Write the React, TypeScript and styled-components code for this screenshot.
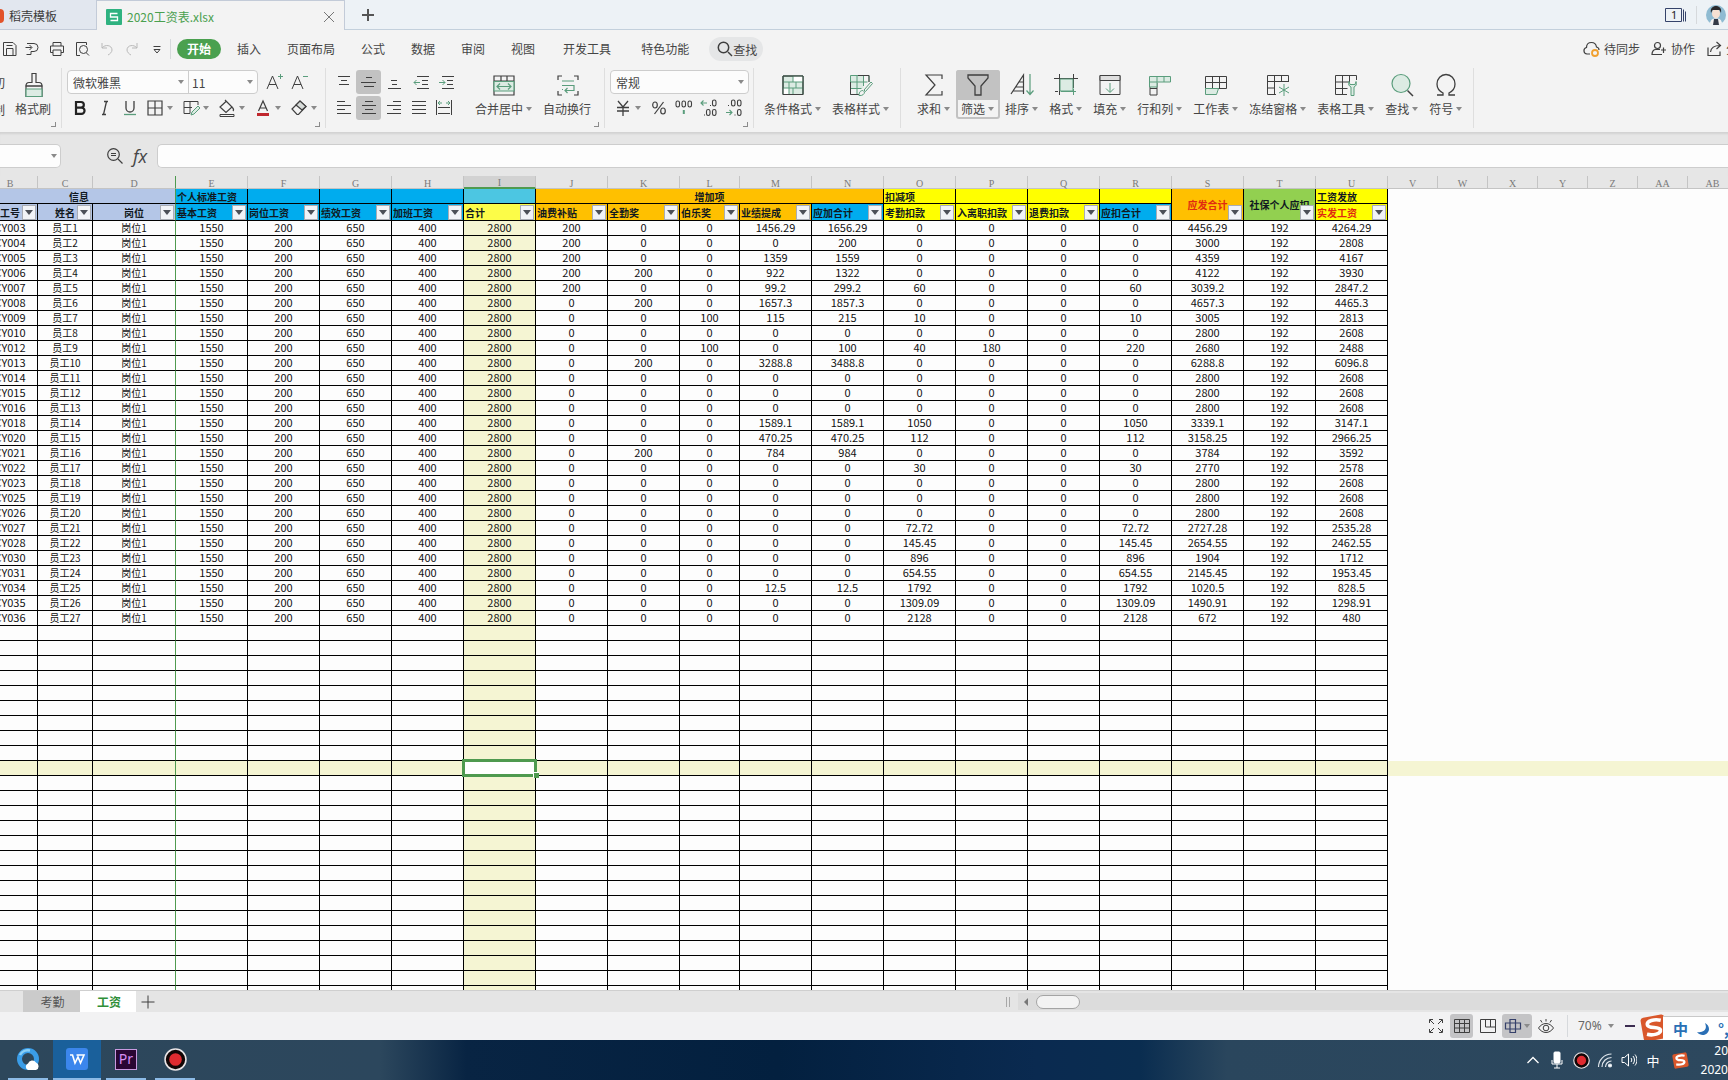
import React from 'react';
import styled, { createGlobalStyle, css } from 'styled-components';

const UI = '"Noto Sans CJK SC", "Noto Sans", sans-serif';
const GREEN = '#4aa04f';
const LINE_GREEN = '#4f9a4f';
const TINT = '#f5f5d3';

const Global = createGlobalStyle`
  *, *::before, *::after { box-sizing: border-box; }
  body { margin: 0; font-family: ${UI}; font-size: 12px; color: #454545; background: #f2f2f2; overflow: hidden; }
  button, input, select { font: inherit; color: inherit; margin: 0; padding: 0; border: 0; background: none; outline: none; }
  svg { display: block; flex: none; }
`;

const Window = styled.div`
  display: flex;
  flex-direction: column;
  height: 100vh;
  overflow: hidden;
`;

/* ---------- title tabs ---------- */
const TitleBar = styled.header`
  display: flex;
  flex: none;
  height: 30px;
  background: #edf2f6;
  box-shadow: inset 0 -1px #c3d0dc;
`;
const DocTab = styled.div<{ $active?: boolean }>`
  display: flex;
  align-items: center;
  gap: 5px;
  width: ${(p) => (p.$active ? 249 : 96)}px;
  padding: 2px ${(p) => (p.$active ? 9 : 0)}px 0;
  line-height: 18px;
  color: ${(p) => (p.$active ? GREEN : '#3c3c3c')};
  background: ${(p) => (p.$active ? '#f3f3f3' : '#e2e7ef')};
  border: solid #c3cbd8;
  border-width: ${(p) => (p.$active ? '1px 1px 0' : '0 0 1px')};
`;
const TabName = styled.span`
  flex: 1;
  white-space: nowrap;
`;
const DocerMark = styled.span`
  width: 4px;
  height: 14px;
  border-radius: 0 7px 7px 0;
  background: #e2532a;
`;
const PlainButton = styled.button<{ $w: number }>`
  display: flex;
  flex: none;
  align-items: center;
  justify-content: center;
  width: ${(p) => p.$w}px;
`;
const TitleRight = styled.div`
  display: flex;
  align-items: center;
  gap: 9px;
  margin-left: auto;
  padding-right: 2px;
`;
const Rule = styled.i<{ $h: number }>`
  flex: none;
  width: 1px;
  height: ${(p) => p.$h}px;
  background: #d6d9dc;
`;

/* ---------- menu ---------- */
const MenuBar = styled.nav`
  display: flex;
  flex: none;
  align-items: center;
  height: 38px;
  background: #f3f3f3;
  overflow: hidden;
`;
const QuickTools = styled.div`
  display: flex;
  align-items: center;
  padding-right: 1px;
`;
const MenuItem = styled.button<{ $wide?: boolean }>`
  flex: none;
  padding: 0 ${(p) => (p.$wide ? 15 : 13)}px;
  line-height: 20px;
  white-space: nowrap;
`;
const StartItem = styled(MenuItem)`
  margin: 0 3px 0 6px;
  padding: 0 10px;
  border-radius: 10px;
  color: #fff;
  font-weight: 700;
  background: ${GREEN};
`;
const SearchItem = styled.button`
  display: flex;
  align-items: center;
  flex: none;
  height: 24px;
  margin-left: 5px;
  padding: 0 6px 0 8px;
  border-radius: 12px;
  background: #e5e6e7;
`;
const Cloud = styled.div`
  display: flex;
  gap: 11px;
  margin-left: auto;
  margin-right: -22px;
`;
const CloudItem = styled.button`
  display: flex;
  flex: none;
  align-items: center;
  gap: 4px;
  line-height: 20px;
  white-space: nowrap;
`;

/* ---------- ribbon ---------- */
const Ribbon = styled.div`
  display: flex;
  flex: none;
  height: 64px;
  background: #f3f3f3;
  overflow: hidden;
`;
const Group = styled.section<{ $pad?: string }>`
  position: relative;
  display: flex;
  flex: none;
  height: 60px;
  padding: ${(p) => p.$pad || '2px 5px 0'};
  border-right: 1px solid #dedede;
`;
const Corner = styled.i`
  position: absolute;
  right: 5px;
  bottom: 1px;
  width: 5px;
  height: 5px;
  border: solid #8b8b8b;
  border-width: 0 1px 1px 0;
`;
const Stack = styled.div`
  display: flex;
  flex-direction: column;
  gap: 2px;
`;
const ToolRow = styled.div`
  display: flex;
  align-items: center;
  height: 24px;
`;
const Tool = styled.button<{ $on?: boolean }>`
  display: flex;
  flex: none;
  align-items: center;
  justify-content: center;
  width: 25px;
  height: 24px;
  border-radius: 3px;
  ${(p) => p.$on && css`background: #c2c2c2;`}
`;
const DropTool = styled(Tool)`
  justify-content: flex-start;
  gap: 2px;
  width: 36px;
  padding-left: 3px;
`;
const CutLabels = styled.div`
  display: flex;
  flex-direction: column;
  gap: 3px;
  width: 5px;
  overflow: hidden;
  direction: rtl;
`;
const CutButton = styled.button`
  height: 24px;
  white-space: nowrap;
`;
const BigButton = styled.button<{ $on?: boolean }>`
  display: flex;
  flex: none;
  flex-direction: column;
  align-items: center;
  height: 49px;
  border-radius: 3px;
  white-space: nowrap;
  ${(p) => p.$on && css`box-shadow: inset 0 0 0 2px #c2c2c2;`}
`;
const BigIcon = styled.span<{ $on?: boolean }>`
  display: flex;
  align-items: center;
  justify-content: center;
  width: 100%;
  height: 30px;
  border-radius: 3px 3px 0 0;
  ${(p) => p.$on && css`background: #c2c2c2;`}
`;
const BigLabel = styled.span`
  display: flex;
  align-items: center;
  gap: 3px;
  padding: 0 6px 0 5px;
  line-height: 18px;
`;
const Fields = styled.div`
  display: flex;
  height: 24px;
  border: 1px solid #cdcdcd;
  border-radius: 4px;
  background: #fcfcfc;
`;
const Field = styled.label<{ $w: number; $line?: boolean }>`
  display: flex;
  align-items: center;
  width: ${(p) => p.$w}px;
  padding: 0 4px 0 5px;
  ${(p) => p.$line && css`border-left: 1px solid #cdcdcd; padding-left: 3px;`}
`;
const Pick = styled.select`
  flex: 1;
  min-width: 0;
  height: 22px;
  appearance: none;
`;
const GrowTools = styled.div`
  display: flex;
  padding-left: 3px;
`;
const Spacer = styled.span<{ $w: number }>`
  flex: none;
  width: ${(p) => p.$w}px;
`;

/* ---------- formula bar ---------- */
const FormulaBar = styled.div`
  display: flex;
  flex: none;
  align-items: center;
  height: 44px;
  padding: 11px 0 8px;
  background: #e6e6e6;
  box-shadow: inset 0 3px 2px -1px #d2d2d2;
`;
const NameBox = styled.label`
  display: flex;
  align-items: center;
  width: 61px;
  height: 24px;
  padding-right: 3px;
  border: 1px solid #cdcdcd;
  border-left: 0;
  border-radius: 0 5px 5px 0;
  background: #fdfdfd;
`;
const NameInput = styled.input`
  flex: 1;
  min-width: 0;
`;
const FormulaTools = styled.div`
  display: flex;
  align-items: center;
  gap: 9px;
  padding: 0 10px 0 45px;
`;
const FormulaInput = styled.input`
  flex: 1;
  height: 24px;
  && {
    border: 1px solid #cdcdcd;
    border-right: 0;
    border-radius: 5px 0 0 5px;
    background: #fdfdfd;
  }
`;
const Fx = styled.button`
  && { font: italic 18px/20px "Open Sans", sans-serif; }
`;

/* ---------- sheet ---------- */
const Sheet = styled.main`
  flex: 1;
  min-height: 0;
  overflow: hidden;
  background: #fdfdfd;
`;
const Grid = styled.table`
  margin-left: -17px;
  border-collapse: separate;
  border-spacing: 0;
  table-layout: fixed;
  color: #111;
`;
const Col = styled.col<{ $w: number }>`
  width: ${(p) => p.$w}px;
`;
const Letter = styled.th<{ $on?: boolean; $freeze?: boolean }>`
  height: 13px;
  padding: 2px 0 0;
  font: 10px/9px "Liberation Serif", serif;
  color: #7a7a7a;
  background: ${(p) => (p.$on ? '#d2d2d2' : '#e6e6e6')};
  border-right: 1px solid ${(p) => (p.$freeze ? LINE_GREEN : '#c4c4c4')};
  border-bottom: ${(p) => (p.$on ? `2px solid ${LINE_GREEN}` : '1px solid #c4c4c4')};
`;
const Head = styled.th<{ $bg: string; $h: number; $left?: boolean; $red?: boolean; $freeze?: boolean }>`
  position: relative;
  height: ${(p) => p.$h}px;
  padding: 0 ${(p) => (p.$left ? 1 : 0)}px;
  font-size: 10px;
  font-weight: 700;
  line-height: 13px;
  white-space: nowrap;
  overflow: hidden;
  text-align: ${(p) => (p.$left ? 'left' : 'center')};
  color: ${(p) => (p.$red ? '#e02a10' : '#101820')};
  background: ${(p) => p.$bg};
  border: solid #000;
  border-width: 0 1px 1px 0;
  ${(p) => p.$freeze && css`border-right-color: ${LINE_GREEN};`}
`;
const Filter = styled.button`
  position: absolute;
  right: 1px;
  bottom: 0;
  display: flex;
  align-items: center;
  justify-content: center;
  width: 14px;
  height: 15px;
  && { background: #f1f3f7; border: 1px solid #a9adb5; }
`;
const Cell = styled.td<{ $text?: boolean; $tint?: boolean; $freeze?: boolean; $free?: boolean }>`
  position: relative;
  height: 15px;
  padding: 0;
  font-size: ${(p) => (p.$text ? 10 : 11)}px;
  line-height: ${(p) => (p.$text ? 14 : 13)}px;
  vertical-align: top;
  text-align: center;
  white-space: nowrap;
  ${(p) => p.$tint && css`background: ${TINT};`}
  ${(p) => !p.$free && css`
    border: solid #000;
    border-width: 0 1px 1px 0;
  `}
  ${(p) => p.$freeze && css`border-right-color: ${LINE_GREEN};`}
`;
const Selection = styled.div`
  position: absolute;
  inset: -2px;
  z-index: 1;
  background: #fff;
  border: 3px solid ${LINE_GREEN};
  &::after {
    content: '';
    position: absolute;
    right: -5px;
    bottom: -4px;
    width: 6px;
    height: 6px;
    background: ${LINE_GREEN};
    border: solid #fff;
    border-width: 1px 0 0 1px;
  }
`;

/* ---------- sheet tabs ---------- */
const SheetBar = styled.div`
  display: flex;
  flex: none;
  align-items: stretch;
  height: 22px;
  padding-left: 23px;
  background: #e5e5e5;
  border-top: 1px solid #cfcfcf;
`;
const SheetTab = styled.button<{ $active?: boolean }>`
  width: ${(p) => (p.$active ? 56 : 57)}px;
  && {
    padding-left: 2px;
    color: ${(p) => (p.$active ? '#2f8f38' : '#555')};
    font-weight: ${(p) => (p.$active ? 700 : 400)};
    line-height: 18px;
    background: ${(p) => (p.$active ? '#fff' : '#cbcbcb')};
  }
`;
const ScrollArea = styled.div`
  display: flex;
  align-items: center;
  gap: 8px;
  width: 722px;
  margin-left: auto;
`;
const Track = styled.div`
  display: flex;
  flex: 1;
  align-items: center;
  gap: 8px;
  height: 17px;
  padding-left: 6px;
  background: #dcdcdc;
`;
const Thumb = styled.i`
  width: 44px;
  height: 14px;
  border: 1px solid #a4a4a4;
  border-radius: 7px;
  background: #f3f3f3;
`;

/* ---------- status bar ---------- */
const StatusBar = styled.footer`
  display: flex;
  flex: none;
  align-items: center;
  justify-content: flex-end;
  height: 28px;
  background: #f2f2f3;
`;
const View = styled.button<{ $on?: boolean; $w: number }>`
  display: flex;
  align-items: center;
  justify-content: center;
  gap: 2px;
  width: ${(p) => p.$w}px;
  height: 24px;
  border-radius: 3px;
  ${(p) => p.$on && css`&& { background: #c4c4c6; }`}
`;
const Views = styled.div`
  display: flex;
  gap: 2px;
  padding-right: 9px;
`;
const Zoom = styled.button`
  display: flex;
  align-items: center;
  gap: 6px;
  width: 51px;
  padding-left: 10px;
  && { font: 12px/20px "Noto Sans", sans-serif; color: #666; }
`;
const Ime = styled.div`
  display: flex;
  align-items: center;
  gap: 9px;
  height: 24px;
  margin-top: 4px;
  width: 88px;
`;
const ImeBar = styled.div`
  display: flex;
  flex: 1;
  align-items: center;
  gap: 8px;
  height: 24px;
  margin-left: -14px;
  padding-left: 10px;
  background: #fff;
  border-top: 1px solid #c9c9c9;
  color: #2a6fb5;
  font-size: 15px;
  font-weight: 700;
  line-height: 20px;
  overflow: hidden;
  white-space: nowrap;
`;

/* ---------- taskbar ---------- */
const Taskbar = styled.footer`
  display: flex;
  flex: none;
  justify-content: space-between;
  height: 40px;
  background: linear-gradient(90deg, #2d475b 0, #2c475d 22%, #082443 27%, #03203f 45%, #0a2a50 60%, #0a2d50 66%, #2a465d 71%, #2d485e 100%);
`;
const Apps = styled.div`
  display: flex;
  gap: 5px;
  padding-left: 8px;
`;
const TaskButton = styled.button<{ $on?: boolean }>`
  display: flex;
  align-items: center;
  justify-content: center;
  width: ${(p) => (p.$on ? 48 : 40)}px;
  margin-right: ${(p) => (p.$on ? 0 : 4)}px;
  &:first-child { margin-right: 0; }
  && {
    background: ${(p) => (p.$on ? '#1a609b' : 'transparent')};
    border-bottom: 2px solid #8dbbe6;
  }
`;
const PrLogo = styled.span`
  width: 22px;
  height: 21px;
  border: 1px solid #c99ae0;
  background: #2a0634;
  color: #d58cf2;
  font: 14px/18px "Noto Sans", sans-serif;
  text-align: center;
`;
const Tray = styled.div`
  display: flex;
  align-items: center;
  color: #fff;
`;
const TrayButton = styled.button<{ $wide?: boolean }>`
  display: flex;
  align-items: center;
  justify-content: center;
  width: ${(p) => (p.$wide ? 30 : 24)}px;
  height: 38px;
  font-size: 13px;
`;
const Clock = styled.time`
  width: 33px;
  font: 12px/19px "Noto Sans", sans-serif;
  text-align: right;
`;

/* ---------- icons ---------- */
type IcoProps = { w?: number; h?: number; d?: string; children?: React.ReactNode; sw?: number; c?: string };
const Ico = ({ w = 18, h = 18, d, children, sw = 1, c = '#3f3f3f' }: IcoProps) => (
  <svg width={w} height={h} viewBox={`0 0 ${w} ${h}`} fill="none" stroke={c} strokeWidth={sw} aria-hidden="true">
    {d && <path d={d} />}
    {children}
  </svg>
);
const G = '#5a9d7c';
const GF = '#dcebe3';
const Caret = ({ c = '#8a8a8a' }: { c?: string }) => (
  <svg width="6" height="4" viewBox="0 0 6 4" aria-hidden="true"><path d="M0 0h6L3 4z" fill={c} /></svg>
);
const Fold = ({ d }: { d: string }) => <path d={d} stroke={G} />;

const quick: [string, React.ReactNode][] = [
  ['保存', <Ico key="a" w={16} h={16} d="M1.500 1.500h9.500l3 3v10h-12.500zM4.500 14.500V7.500h6.500v7M4.500 4.500h6" />],
  ['输出为PDF', <Ico key="b" w={16} h={16} d="M3 2.500h7a4 4 0 010 8H7v3H2.500M1.500 6.500h6M5.500 4l2.500 2.500L5.500 9" />],
  ['打印', <Ico key="c" w={16} h={16} d="M4 5V1.500h8V5M4 11.500H1.500V5h13v6.500H12M4 9h8v5.500H4z" />],
  ['打印预览', <Ico key="d" w={16} h={16} d="M6 14.500H2.500v-13h10V4M12.500 12l2.500 2.500"><circle cx="9.500" cy="8.500" r="4" /></Ico>],
  ['撤销', <Ico key="e" w={16} h={16} c="#b9b9b9" d="M3 2v5h5M3 7c3-4 10-3 10 2 0 2-2 4-4 5" />],
  ['恢复', <Ico key="f" w={16} h={16} c="#b9b9b9" d="M13 2v5H8M13 7C10 3 3 4 3 9c0 2 2 4 4 5" />],
  ['更多', <Ico key="g" w={16} h={16} d="M4.500 5.500h7M5 8.500l3 3.500 3-3.500z" />],
];

const hl = (rows: [number, number, number][]) => rows.map(([x, y, w]) => `M${x} ${y}.5h${w}`).join('');
const alignTop = hl([[3, 3, 12], [6, 7, 6], [4, 11, 10]]);
const alignMid = hl([[6, 4, 6], [1, 9, 15], [4, 13, 10]]);
const alignBot = hl([[6, 7, 6], [7, 11, 5], [3, 15, 13]]);
const alignL = hl([[2, 2, 8], [2, 6, 14], [2, 10, 8], [2, 14, 14]]);
const alignC = hl([[5, 2, 8], [2, 6, 14], [5, 10, 8], [2, 14, 14]]);
const alignR = hl([[8, 2, 8], [2, 6, 14], [8, 10, 8], [2, 14, 14]]);
const alignJ = hl([[2, 2, 14], [2, 6, 14], [2, 10, 14], [2, 14, 14]]);

type BigProps = { label: string; drop?: boolean; on?: boolean; children: React.ReactNode };
const Big = ({ label, drop = true, on, children }: BigProps) => (
  <BigButton $on={on}>
    <BigIcon $on={on}>{children}</BigIcon>
    <BigLabel>{label}{drop && <Caret />}</BigLabel>
  </BigButton>
);

const bigTools: { label: string; on?: boolean; icon: React.ReactNode }[] = [
  { label: '求和', icon: <Ico w={24} h={24} sw={1.2} d="M20 6V2H4l9 10-9 10h16v-4" /> },
  { label: '筛选', on: true, icon: <Ico w={24} h={24} sw={1.3} d="M2 2h20v3l-7 8v9H9v-9L2 5z" /> },
  { label: '排序', icon: <Ico w={24} h={24} sw={1.2} d="M1 21L13.500 2v19M6 14h7.500M3 18h10.500M9 9h4.500"><Fold d="M20 1v20M16.500 17.500L20 21.500l3.500-4" /></Ico> },
  { label: '格式', icon: <Ico w={24} h={24} d="M0 5.500h24M5.500 1v21M1 18.500h3M19.500 1v14"><path d="M6 6h13v12H6z" fill={GF} stroke={G} /><Fold d="M7 18.500h15M19.500 16v6" /></Ico> },
  { label: '填充', icon: <Ico w={24} h={24} d="M2 2.500h20v19H2z"><path d="M2 2.500h20v5H2z" fill="#dedede" /><Fold d="M12 10v9M8 15.500l4 4 4-4" /></Ico> },
  { label: '行和列', icon: <Ico w={24} h={24} d="M2 10v12h7V10M2 15.500h7"><path d="M1.500 3.500h21V9H9v5H1.500z" fill={GF} stroke={G} /><Fold d="M9 3.500V9H1.500M16 3.500V9" /></Ico> },
  { label: '工作表', icon: <Ico w={24} h={24} d="M1.500 3.500h21v12h-21zM8.500 3.500v12M15.500 3.500v12M1.500 9.500h21"><path d="M1.500 15.500h13l-2 6h-11z" fill={GF} stroke={G} /></Ico> },
  { label: '冻结窗格', icon: <Ico w={24} h={24} d="M10 21.500H1.500v-19h21V9M1.500 8.500h21M8.500 2.500v19M15.500 2.500v6M1.500 15h7"><Fold d="M18 11v12M13 14l10 6M23 14l-10 6" /></Ico> },
  { label: '表格工具', icon: <Ico w={24} h={24} d="M13 21.500H1.500v-19h21V7M8.500 2.500v19M15.500 2.500v7M1.500 9h14M1.500 15.500h12"><path d="M15 8.500c-1 3 0 4.500 2 5.500v8.500h3V14c2-1 3-2.500 2-5.500l-1 3h-5z" fill={GF} stroke={G} /></Ico> },
  { label: '查找', icon: <Ico w={24} h={24} d="M17.500 17.500L23 23" sw={1.5}><circle cx="11" cy="10.500" r="9" fill={GF} stroke={G} strokeWidth="1.200" /></Ico> },
  { label: '符号', icon: <Ico w={24} h={24} sw={1.3} d="M3 22h6v-2C5 18 3 15 3 11a9 9.500 0 0118 0c0 4-2 7-6 9v2h6" /> },
];

/* ---------- data ---------- */
const cols: [string, number][] = [
  ['B', 55], ['C', 55], ['D', 83], ['E', 72], ['F', 72], ['G', 72], ['H', 72], ['I', 72], ['J', 72], ['K', 72],
  ['L', 60], ['M', 72], ['N', 72], ['O', 72], ['P', 72], ['Q', 72], ['R', 72], ['S', 72], ['T', 72], ['U', 72],
  ['V', 50], ['W', 50], ['X', 50], ['Y', 50], ['Z', 50], ['AA', 50], ['AB', 50],
];
const LAVENDER = '#b4c6e7', BLUE = '#00acee', ORANGE = '#ffc000', YELLOW = '#ffff00', LEAF = '#92d050';
const heads: [string, string, boolean?, boolean?][] = [
  ['工号', LAVENDER], ['姓名', LAVENDER], ['岗位', LAVENDER],
  ['基本工资', BLUE, true], ['岗位工资', BLUE, true], ['绩效工资', BLUE, true], ['加班工资', BLUE, true],
  ['合计', '#fcfc48', true], ['油费补贴', ORANGE, true], ['全勤奖', ORANGE, true], ['伯乐奖', ORANGE, true],
  ['业绩提成', ORANGE, true], ['应加合计', BLUE, true], ['考勤扣款', YELLOW, true], ['入离职扣款', YELLOW, true],
  ['退费扣款', YELLOW, true], ['应扣合计', BLUE, true], ['实发工资', YELLOW, true, true],
];
const ids = '003 004 005 006 007 008 009 010 012 013 014 015 016 018 020 021 022 023 025 026 027 028 030 031 034 035 036'.split(' ');
const tails = `200 0 0 1456.29 1656.29 0 0 0 0 4456.29 192 4264.29
200 0 0 0 200 0 0 0 0 3000 192 2808
200 0 0 1359 1559 0 0 0 0 4359 192 4167
200 200 0 922 1322 0 0 0 0 4122 192 3930
200 0 0 99.2 299.2 60 0 0 60 3039.2 192 2847.2
0 200 0 1657.3 1857.3 0 0 0 0 4657.3 192 4465.3
0 0 100 115 215 10 0 0 10 3005 192 2813
0 0 0 0 0 0 0 0 0 2800 192 2608
0 0 100 0 100 40 180 0 220 2680 192 2488
0 200 0 3288.8 3488.8 0 0 0 0 6288.8 192 6096.8
0 0 0 0 0 0 0 0 0 2800 192 2608
0 0 0 0 0 0 0 0 0 2800 192 2608
0 0 0 0 0 0 0 0 0 2800 192 2608
0 0 0 1589.1 1589.1 1050 0 0 1050 3339.1 192 3147.1
0 0 0 470.25 470.25 112 0 0 112 3158.25 192 2966.25
0 200 0 784 984 0 0 0 0 3784 192 3592
0 0 0 0 0 30 0 0 30 2770 192 2578
0 0 0 0 0 0 0 0 0 2800 192 2608
0 0 0 0 0 0 0 0 0 2800 192 2608
0 0 0 0 0 0 0 0 0 2800 192 2608
0 0 0 0 0 72.72 0 0 72.72 2727.28 192 2535.28
0 0 0 0 0 145.45 0 0 145.45 2654.55 192 2462.55
0 0 0 0 0 896 0 0 896 1904 192 1712
0 0 0 0 0 654.55 0 0 654.55 2145.45 192 1953.45
0 0 0 12.5 12.5 1792 0 0 1792 1020.5 192 828.5
0 0 0 0 0 1309.09 0 0 1309.09 1490.91 192 1298.91
0 0 0 0 0 2128 0 0 2128 672 192 480`.split('\n').map((l) => l.split(' '));
const rows: string[][] = Array.from({ length: 52 }, (_, i) =>
  i < tails.length ? [`CY${ids[i]}`, `员工${i + 1}`, '岗位1', '1550', '200', '650', '400', '2800', ...tails[i]] : Array(20).fill(''),
);
const ACTIVE_ROW = 36;
const ACTIVE_COL = 7;

const FilterButton = ({ name }: { name: string }) => (
  <Filter aria-label={`${name}筛选`}>
    <svg width="8" height="5" viewBox="0 0 8 5" aria-hidden="true"><path d="M0 0h8L4 5z" fill="#4c5058" /></svg>
  </Filter>
);

const SogouMark = ({ size }: { size: number }) => (
  <svg width={size} height={size} viewBox="0 0 28 28" aria-hidden="true">
    <g transform="rotate(-10 14 14)">
      <rect x="2" y="2" width="24" height="24" rx="3" fill="#d9572b" />
      <path d="M22 7.500C16 5 8 5.500 8 9.500c0 5 12 3 12 7.500 0 4-8 4.500-14 2" fill="none" stroke="#fff" strokeWidth="3.600" />
    </g>
  </svg>
);
const RecordMark = ({ size }: { size: number }) => (
  <svg width={size} height={size} viewBox="0 0 22 22" aria-hidden="true">
    <circle cx="11" cy="11" r="10" fill="#120606" stroke="#e9e4e6" strokeWidth="1.500" />
    <circle cx="11" cy="11" r="6" fill="#e02b30" />
  </svg>
);

export default function App() {
  return (
    <Window lang="zh-CN">
      <Global />
      <TitleBar>
        <DocTab><DocerMark /><TabName>稻壳模板</TabName></DocTab>
        <DocTab $active>
          <svg width="16" height="16" viewBox="0 0 16 16" aria-hidden="true">
            <rect width="16" height="16" rx="1" fill="#2fb280" />
            <path d="M11.500 4.500h-7V8h7v3.500h-7" fill="none" stroke="#fff" strokeWidth="1.300" />
          </svg>
          <TabName>2020工资表.xlsx</TabName>
          <PlainButton $w={12} aria-label="关闭"><Ico w={12} h={12} c="#777" d="M1 1l10 10M11 1L1 11" /></PlainButton>
        </DocTab>
        <PlainButton $w={46} aria-label="新建"><Ico w={14} h={14} sw={2} c="#555" d="M7 1v12M1 7h12" /></PlainButton>
        <TitleRight>
          <Ico w={22} h={16} c="#35436a" d="M.5 1.500h16v13H.5zM18.500 2.500v12M20.500 4.500v10">
            <text x="6" y="12" fontSize="11" fontFamily="Noto Sans" fill="#222" stroke="none">1</text>
          </Ico>
          <Rule $h={18} />
          <svg width="20" height="20" viewBox="0 0 20 20" aria-hidden="true">
            <circle cx="10" cy="10" r="10" fill="#8fbbd2" />
            <path d="M4 18c1-4 3-4.500 6-4.500s5 .5 6 4.500c-3 2.500-9 2.500-12 0z" fill="#f4f4f4" />
            <path d="M8 14h4l1 6H7z" fill="#333a48" />
            <ellipse cx="10" cy="8.500" rx="4" ry="5" fill="#f6e1d3" />
            <path d="M5 8c-1-5 2-7 5-7s6 2 5 7l-1.500-3h-7z" fill="#2b2b2e" />
          </svg>
        </TitleRight>
      </TitleBar>

      <MenuBar>
        <QuickTools>
          {quick.map(([n, icon], i) => (
            <PlainButton key={n} $w={i ? 25 : 19} aria-label={n}>{icon}</PlainButton>
          ))}
        </QuickTools>
        <Rule $h={20} />
        <StartItem>开始</StartItem>
        {['插入', '页面布局', '公式', '数据', '审阅', '视图'].map((m) => <MenuItem key={m}>{m}</MenuItem>)}
        <MenuItem $wide>开发工具</MenuItem>
        <MenuItem $wide>特色功能</MenuItem>
        <SearchItem>
          <Ico w={16} h={16} sw={1.5} d="M11 11l4 4"><circle cx="6.500" cy="6.500" r="5.200" /></Ico>
          查找
        </SearchItem>
        <Cloud>
          <CloudItem>
            <Ico w={17} h={16} sw={1.2} d="M7 13H4a3.300 3.300 0 01-.5-6.500C3.500 3 6 1.500 8.500 1.500S13 3 13.500 6c2 .5 2.500 2 2.500 3"><circle cx="12" cy="12" r="3" stroke="#f0a030" strokeWidth="1.800" /></Ico>
            待同步
          </CloudItem>
          <CloudItem>
            <Ico w={16} h={16} sw={1.2} d="M9 8.500H5c-2.500 0-4 2-4 5h10M10 9h5M12.500 6.500v5.500"><circle cx="6.500" cy="4.500" r="3" /></Ico>
            协作
          </CloudItem>
          <CloudItem>
            <Ico w={16} h={16} sw={1.2} d="M2 6.500v8h12v-4M4.500 11C5 7 8 4.500 14 4.500M10.500 1l4 3.500-4 3.500" />
            分享
          </CloudItem>
        </Cloud>
      </MenuBar>

      <Ribbon>
        <Group $pad="2px 4px 0 0">
          <CutLabels><CutButton>剪切</CutButton><CutButton>复制</CutButton></CutLabels>
          <Spacer $w={5} />
          <Big label="格式刷" drop={false}>
            <Ico w={20} h={26} sw={1.2} d="M8 1.500h4v9h3c2 0 3 1 3 3.500H2c0-2.500 1-3.500 3-3.500h3z"><path d="M2 14h16v10.500H2z" /><path d="M2 17h16v7.500H2z" fill={GF} stroke={G} /></Ico>
          </Big>
          <Corner />
        </Group>

        <Group $pad="2px 3px 0 5px">
          <Stack>
            <ToolRow>
              <Fields>
                <Field $w={120}><Pick aria-label="字体"><option>微软雅黑</option></Pick><Caret /></Field>
                <Field $w={69} $line><Pick aria-label="字号"><option>11</option></Pick><Caret /></Field>
              </Fields>
              <GrowTools>
                <Tool aria-label="增大字号"><Ico d="M2 16L7.500 3 13 16M4 11.500h7"><Fold d="M13 3.500h5M15.500 1v5" /></Ico></Tool>
                <Tool aria-label="减小字号"><Ico d="M2 16L7.500 3 13 16M4 11.500h7"><Fold d="M13 3.500h5" /></Ico></Tool>
              </GrowTools>
            </ToolRow>
            <ToolRow>
              <Tool aria-label="加粗"><Ico w={16} h={16} sw={2.2} c="#222" d="M4 2h5a2.800 2.800 0 010 5.700H4zM4 7.700h5.500a3 3 0 010 6.100H4z" /></Tool>
              <Tool aria-label="倾斜"><Ico w={16} h={16} d="M7 1.500h4M5 14.500h4M9.500 1.500l-3 13" sw={1.3} /></Tool>
              <Tool aria-label="下划线"><Ico w={16} h={16} sw={1.3} d="M4 1v7a4 4 0 008 0V1"><Fold d="M2 14.500h12" /></Ico></Tool>
              <DropTool aria-label="边框"><Ico w={20} h={18} sw={1.2} d="M3 2h14v14H3zM10 2v14M3 9h14" /><Caret /></DropTool>
              <DropTool aria-label="绘制边框"><Ico w={20} h={18} d="M17 6V2.500H3v12h6M3 8.500h8M9 2.500v12"><path d="M10 16l1-3 6-6 2 2-6 6z" fill={GF} stroke={G} /></Ico><Caret /></DropTool>
              <DropTool aria-label="填充颜色"><Ico w={20} h={18} sw={1.2} d="M8 1l7 7-6 5.500L3 8l6-5.500M15 8c2 2 2 3 1 4"><path d="M3 15.500h14v2H3z" strokeWidth="1" /></Ico><Caret /></DropTool>
              <DropTool aria-label="字体颜色"><Ico w={20} h={18} sw={1.2} d="M5.500 12L10 2l4.500 10M7 9h6"><path d="M4 15.500h12" stroke="#c0272d" strokeWidth="3" /></Ico><Caret /></DropTool>
              <DropTool aria-label="清除"><Ico w={20} h={18} sw={1.2} d="M3 10l8-8 6 5.500-7.500 8H8z"><path d="M7 6l6 5 4-3.500L11 2z" fill="#d8dcda" /></Ico><Caret /></DropTool>
            </ToolRow>
          </Stack>
          <Corner />
        </Group>

        <Group $pad="2px 7px 0 5px">
          <Stack>
            <ToolRow>
              <Tool aria-label="顶端对齐"><Ico d={alignTop} sw={1.2} /></Tool>
              <Tool $on aria-label="垂直居中"><Ico d={alignMid} sw={1.2} /></Tool>
              <Tool aria-label="底端对齐"><Ico d={alignBot} sw={1.2} /></Tool>
              <Spacer $w={2} />
              <Tool aria-label="减少缩进"><Ico d="M5 3.500h12M10 7.500h6M10 11.500h6M5 15.500h12"><Fold d="M2 9.500h6M4.500 7L2 9.500 4.500 12" /></Ico></Tool>
              <Tool aria-label="增加缩进"><Ico d="M5 3.500h12M10 7.500h6M10 11.500h6M5 15.500h12"><Fold d="M2 9.500h6M5.500 7L8 9.500 5.500 12" /></Ico></Tool>
            </ToolRow>
            <ToolRow>
              <Tool aria-label="左对齐"><Ico d={alignL} sw={1.2} /></Tool>
              <Tool $on aria-label="居中"><Ico d={alignC} sw={1.2} /></Tool>
              <Tool aria-label="右对齐"><Ico d={alignR} sw={1.2} /></Tool>
              <Tool aria-label="两端对齐"><Ico d={alignJ} sw={1.2} /></Tool>
              <Tool aria-label="分散对齐"><Ico d="M1.500 1v15M16.500 1v15M3 8.500h12M3 14.500h12"><Fold d="M3 4h4M11 4h4M5 2L3 4l2 2M13 2l2 2-2 2" /></Ico></Tool>
            </ToolRow>
          </Stack>
          <Spacer $w={12} />
          <Big label="合并居中">
            <Ico w={24} h={24} sw={1.2} d="M2 3h20v19H2zM2 8h20M9 3v5M15 3v5"><path d="M2 8.500h20V18H2z" fill={GF} stroke={G} /><Fold d="M5 13.500h14M8 10.500l-3 3 3 3M16 10.500l3 3-3 3" /></Ico>
          </Big>
          <Big label="自动换行" drop={false}>
            <Ico w={24} h={24} sw={1.2} d="M6 3H2v4M18 3h4v4M6 22H2v-4M18 22h4v-4"><Fold d="M6 8h12M6 12.500h12v5H9M11.500 15L9 17.500l2.500 2.500M6 16.500h1" /></Ico>
          </Big>
          <Corner />
        </Group>

        <Group $pad="2px 4px 0 5px">
          <Stack>
            <ToolRow>
              <Fields><Field $w={137}><Pick aria-label="数字格式"><option>常规</option></Pick><Caret /></Field></Fields>
            </ToolRow>
            <ToolRow>
              <DropTool aria-label="货币"><Ico w={20} h={18} sw={1.3} d="M5 2l5 6 5-6M4 8.500h12M4 12h12M10 8v9" /><Caret /></DropTool>
              <Tool aria-label="百分比"><Ico w={16} h={16} sw={1.2} d="M12.500 2l-9 12"><ellipse cx="4" cy="5" rx="2.300" ry="3" /><ellipse cx="12" cy="11" rx="2.300" ry="3" /></Ico></Tool>
              <Tool aria-label="千位分隔"><Ico w={20} h={18} sw={1.1}><rect x="2" y="2" width="3.500" height="6" rx="1.700" /><rect x="8" y="2" width="3.500" height="6" rx="1.700" /><rect x="14" y="2" width="3.500" height="6" rx="1.700" /><path d="M9.800 11v4" stroke={G} strokeWidth="2" /></Ico></Tool>
              <Tool aria-label="增加小数"><Ico w={20} h={18} sw={1.1}><rect x="13.500" y="1" width="3.500" height="6" rx="1.700" /><rect x="7.500" y="10.500" width="3.500" height="6" rx="1.700" /><rect x="13.500" y="10.500" width="3.500" height="6" rx="1.700" /><path d="M11 6.500h1M5 16h1" /><Fold d="M2 4h6M4.500 1.500L2 4l2.500 2.500" /></Ico></Tool>
              <Tool aria-label="减少小数"><Ico w={20} h={18} sw={1.1}><rect x="7.500" y="1" width="3.500" height="6" rx="1.700" /><rect x="13.500" y="1" width="3.500" height="6" rx="1.700" /><rect x="13.500" y="10.500" width="3.500" height="6" rx="1.700" /><path d="M4 6.500h1M10.500 16h1" /><Fold d="M2 13.500h6M5.500 11L8 13.500 5.500 16" /></Ico></Tool>
            </ToolRow>
          </Stack>
          <Corner />
        </Group>

        <Group>
          <Big label="条件格式">
            <Ico w={24} h={24}><path d="M2 3h20v18.500H2z" fill={GF} /><path d="M12 3h10v6H12zM2 15h6v6.500H2z" fill="#fff" stroke="none" /><path d="M2 3h20v18.500H2zM12 3v6M8 9v12.500M15 9v6M2 9h20M2 15h20M12 15v6" stroke={G} /><path d="M2 3h20v18.500H2z" /></Ico>
          </Big>
          <Big label="表格样式">
            <Ico w={24} h={24}><path d="M1.500 2.500h13v13h-13z" fill={GF} stroke="none" /><path d="M10 21.500H1.500v-19H20V9M8 2.500v19M14.500 2.500V13M1.500 9h17M1.500 15.500h11" stroke={G} /><path d="M9 2.500h11V9M1.500 9v12.500H10" /><path d="M10 22.500c0-4 2-5 4-5l1.500 1.500c0 2-2 4-5.500 3.500zM15 17l7-8 1.500 1.500-7 8z" fill="#f3f3f3" stroke={G} /></Ico>
          </Big>
        </Group>

        <Group $pad="2px 5px 0 11px">
          {bigTools.map((t) => <Big key={t.label} label={t.label} on={t.on}>{t.icon}</Big>)}
        </Group>
      </Ribbon>

      <FormulaBar>
        <NameBox><NameInput aria-label="名称框" /><Caret /></NameBox>
        <FormulaTools>
          <PlainButton $w={18} aria-label="浏览公式"><Ico sw={1.2} d="M12 12l4.500 4.500M5 6.500h5M5 8.500h5"><circle cx="7.500" cy="7.500" r="5.800" /></Ico></PlainButton>
          <Fx aria-label="插入函数">fx</Fx>
        </FormulaTools>
        <FormulaInput aria-label="编辑栏" />
      </FormulaBar>

      <Sheet>
        <Grid style={{ width: cols.reduce((s, c) => s + c[1], 0) }}>
          <colgroup>{cols.map(([n, w]) => <Col key={n} $w={w} />)}</colgroup>
          <thead>
            <tr>
              {cols.map(([n]) => <Letter key={n} $on={n === 'I'} $freeze={n === 'D'}>{n}</Letter>)}
            </tr>
            <tr>
              <Head $bg={LAVENDER} $h={15} colSpan={3} $freeze>信息</Head>
              <Head $bg={BLUE} $h={15} $left>个人标准工资</Head>
              <Head $bg={BLUE} $h={15} />
              <Head $bg={BLUE} $h={15} />
              <Head $bg={BLUE} $h={15} />
              <Head $bg="#4cc6e2" $h={15} />
              <Head $bg={ORANGE} $h={15} colSpan={5}>增加项</Head>
              <Head $bg={YELLOW} $h={15} $left>扣减项</Head>
              <Head $bg={YELLOW} $h={15} />
              <Head $bg={YELLOW} $h={15} />
              <Head $bg={YELLOW} $h={15} />
              <Head $bg={ORANGE} $h={32} rowSpan={2} $red>应发合计<FilterButton name="应发合计" /></Head>
              <Head $bg={LEAF} $h={32} rowSpan={2}>社保个人应扣<FilterButton name="社保个人应扣" /></Head>
              <Head $bg={YELLOW} $h={15} $left>工资发放</Head>
            </tr>
            <tr>
              {heads.map(([t, bg, left, red], i) => (
                <Head key={t} $bg={bg} $h={17} $left={left} $red={red} $freeze={i === 2}>{t}<FilterButton name={t} /></Head>
              ))}
            </tr>
          </thead>
          <tbody>
            {rows.map((r, ri) => (
              <tr key={ri}>
                {r.map((v, ci) => (
                  <Cell key={ci} $text={ci === 1 || ci === 2} $freeze={ci === 2} $tint={ri === ACTIVE_ROW || ci === ACTIVE_COL}>
                    {v}
                    {ri === ACTIVE_ROW && ci === ACTIVE_COL && <Selection />}
                  </Cell>
                ))}
                <Cell $free $tint={ri === ACTIVE_ROW} colSpan={7} />
              </tr>
            ))}
          </tbody>
        </Grid>
      </Sheet>

      <SheetBar>
        <SheetTab>考勤</SheetTab>
        <SheetTab $active>工资</SheetTab>
        <PlainButton $w={23} aria-label="新建工作表"><Ico w={14} h={14} d="M7 .5v13M.5 7h13" /></PlainButton>
        <ScrollArea>
          <Ico w={4} h={12} c="#a8a8a8" d="M.5 1v10M3.500 1v10" />
          <Track>
            <svg width="4" height="8" viewBox="0 0 4 8" aria-hidden="true"><path d="M4 0v8L0 4z" fill="#777" /></svg>
            <Thumb />
          </Track>
        </ScrollArea>
      </SheetBar>

      <StatusBar>
        <Views>
          <View $w={24} aria-label="全屏"><Ico w={16} h={16} d="M1.500 5V1.500H5M2 2l4 4M11 1.500h3.500V5M14 2l-4 4M1.500 11v3.500H5M2 14l4-4M14.500 11v3.500H11M14 14l-4-4" /></View>
          <View $w={23} $on aria-label="普通视图"><Ico w={18} h={16} d="M1.500 1.500h15v13h-15zM6.500 1.500v13M11.500 1.500v13M1.500 5.500h15M1.500 10h15" /></View>
          <View $w={25} aria-label="分页预览"><Ico w={18} h={16} d="M1.500 1.500h15v13h-15zM6.500 1.500V9h5V1.500M11.500 9h5" /></View>
          <View $w={30} $on aria-label="阅读模式"><Ico w={18} h={16} c="#35406a" sw={1.2} d="M6 1.500h5.500v13H6zM1.500 5h15v6h-15z" /><Caret /></View>
          <View $w={24} aria-label="护眼模式"><Ico w={18} h={16} d="M1.500 10c4-6 11-6 15 0-4 6-11 6-15 0zM9 1v2.500M3.500 2l1.500 2.500M14.500 2L13 4.500"><circle cx="9" cy="10" r="2.800" /></Ico></View>
        </Views>
        <Rule $h={22} />
        <Zoom>70%<Caret /></Zoom>
        <PlainButton $w={21} aria-label="缩小"><Ico w={10} h={4} sw={2} c="#3b2c50" d="M0 2h10" /></PlainButton>
        <Ime>
          <SogouMark size={28} />
          <ImeBar>
            中
            <Ico w={14} h={14}><path d="M9 1c3 7-2 10-8 9 5 6 12 2 12-3 0-3-2-5-4-6z" fill="#2a6fb5" stroke="none" /></Ico>
            <span>°,</span>
          </ImeBar>
        </Ime>
      </StatusBar>

      <Taskbar>
        <Apps>
          <TaskButton aria-label="QQ浏览器">
            <svg width="24" height="24" viewBox="0 0 24 24" aria-hidden="true">
              <circle cx="12" cy="12" r="8.500" fill="none" stroke="#3a9de8" strokeWidth="5" />
              <path d="M4 8a9 9 0 0110-4.500" fill="none" stroke="#8ad0f8" strokeWidth="2.500" />
              <path d="M12 23a3.500 3.500 0 010-6.500 4.500 4.500 0 018-1 4 4 0 010 7.500z" fill="#fff" />
            </svg>
          </TaskButton>
          <TaskButton $on aria-label="WPS">
            <svg width="22" height="22" viewBox="0 0 22 22" aria-hidden="true">
              <rect width="22" height="22" rx="3" fill="#3b86ec" />
              <path d="M4 7h2.500L9 15l3-6 2.500 6L18 7h-7.500" fill="none" stroke="#fff" strokeWidth="1.600" />
            </svg>
          </TaskButton>
          <TaskButton aria-label="Premiere"><PrLogo>Pr</PrLogo></TaskButton>
          <TaskButton aria-label="录屏"><RecordMark size={23} /></TaskButton>
        </Apps>
        <Tray>
          <TrayButton aria-label="显示隐藏的图标"><Ico w={14} h={10} c="#fff" sw={1.3} d="M1.500 8L7 2.500 12.500 8" /></TrayButton>
          <TrayButton aria-label="麦克风"><Ico w={14} h={18} c="#fff" d="M2 9v4h10V9M7 13v4M4 17h6"><rect x="4" y="1" width="6" height="11" rx="1" fill="#fff" /></Ico></TrayButton>
          <TrayButton aria-label="录制"><RecordMark size={17} /></TrayButton>
          <TrayButton aria-label="网络"><Ico w={16} h={16} c="#dfe6ec" sw={1.2} d="M1.500 15A13 13 0 0114.500 2M5 15A9.500 9.500 0 0114.500 5.500M8.500 15a6 6 0 016-6"><circle cx="13" cy="13.500" r="1.500" fill="#fff" /></Ico></TrayButton>
          <TrayButton aria-label="音量"><Ico w={16} h={16} c="#fff" d="M1 5.500h2.500L7.500 2v12l-4-3.500H1zM10 6c1 1.300 1 2.700 0 4M12 4c2 2.500 2 5.500 0 8M14 2.500c2.500 3 2.500 8 0 11" /></TrayButton>
          <TrayButton>中</TrayButton>
          <TrayButton $wide aria-label="搜狗输入法"><SogouMark size={17} /></TrayButton>
          <Clock>20<br />2020</Clock>
        </Tray>
      </Taskbar>
    </Window>
  );
}
